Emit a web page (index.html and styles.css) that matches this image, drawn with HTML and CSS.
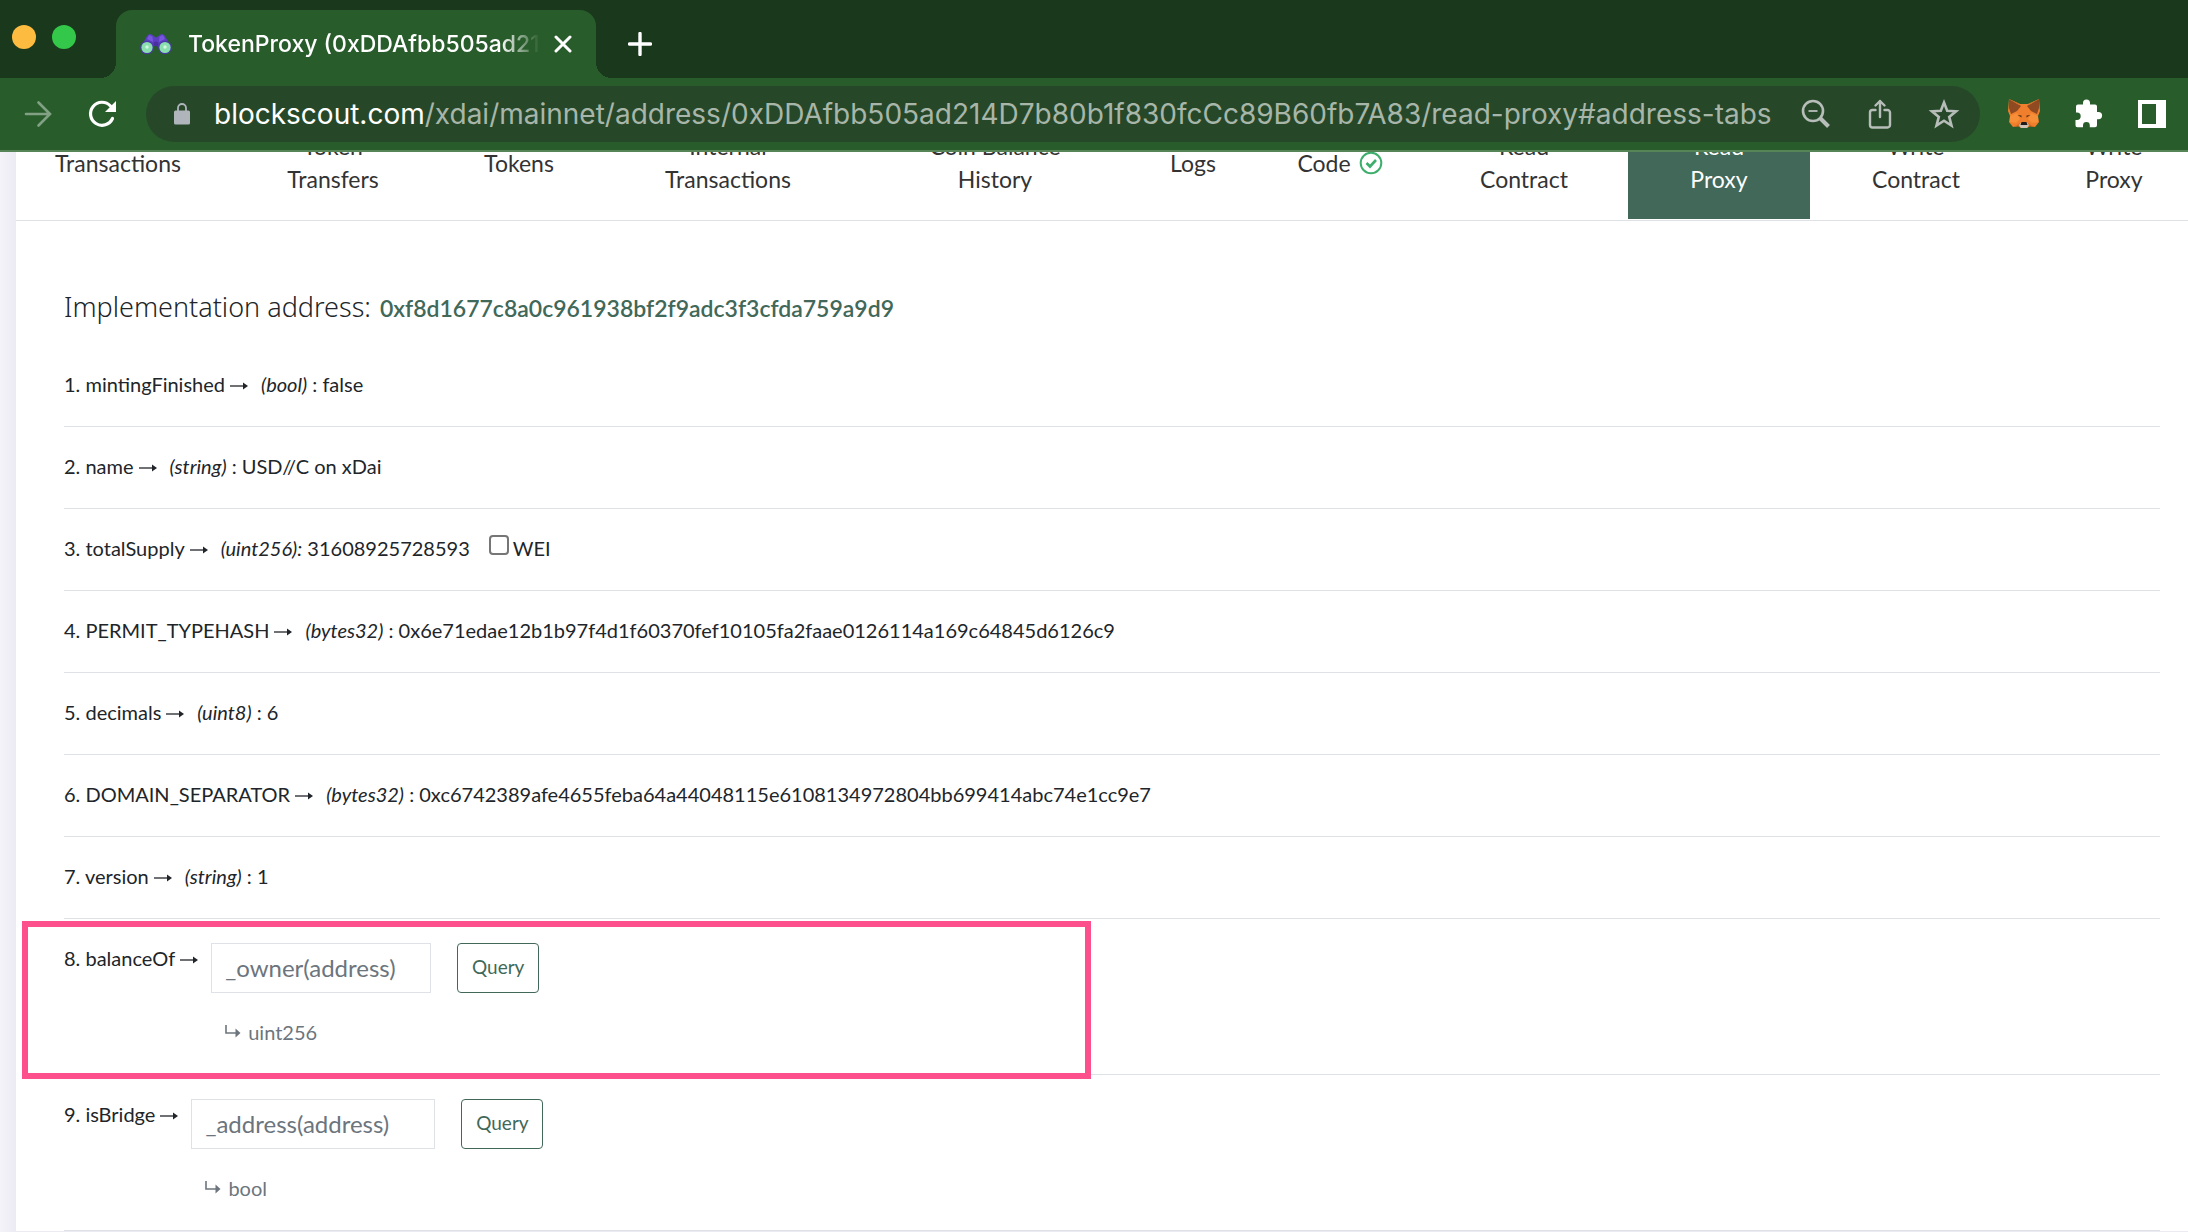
FILE: index.html
```
<!DOCTYPE html>
<html lang="en">
<head>
<meta charset="utf-8">
<meta name="viewport" content="width=device-width, initial-scale=1">
<title>TokenProxy (0xDDAfbb505ad214D7b80b1f830fcCc89B60fb7A83)</title>
<link rel="stylesheet" href="styles.css">
</head>
<body>
<svg class="defs" aria-hidden="true">
  <symbol id="arrow" viewBox="0 0 18 12"><path d="M0 6H16" fill="none" stroke="currentColor" stroke-width="1.300"/><path d="M13 2.500L18 6l-5 3.500z" fill="currentColor"/></symbol>
  <symbol id="turn" viewBox="0 0 16 14"><path d="M1 0V8H13" fill="none" stroke="currentColor" stroke-width="1.600"/><path d="M10.500 3.500L15.500 8l-5 4.500z" fill="currentColor"/></symbol>
</svg>

<header class="browser">
  <div class="tabstrip">
    <div class="lights"><span class="light light-amber"></span><span class="light light-green"></span></div>
    <div class="tab">
      <svg class="favicon" viewBox="0 0 32 22" aria-hidden="true">
        <path d="M2 12L7 3Q10-1 13.500 3L16 4.500 18.500 3Q22-1 25 3l5 9-8 5H20l-2-4h-4l-2 4H9z" fill="#5b3fbf"/>
        <path d="M9 2l3.500 1.500L13 9 7 6zM23 2l-3.500 1.500L19 9l6-3z" fill="#7656dc"/>
        <circle cx="16" cy="11" r="2.500" fill="#4a2fa0"/>
        <circle cx="7" cy="14.500" r="6.800" fill="#4a3aa8"/><circle cx="25" cy="14.500" r="6.800" fill="#4a3aa8"/>
        <circle cx="7" cy="14.500" r="5.600" fill="#8adfae"/><circle cx="25" cy="14.500" r="5.600" fill="#8adfae"/>
        <circle cx="7" cy="14" r="1.700" fill="#d4f6e0"/><circle cx="25" cy="14" r="1.700" fill="#d4f6e0"/>
      </svg>
      <span class="tab-title">TokenProxy (0xDDAfbb505ad214D7b80</span>
      <button class="icon-btn tab-close" aria-label="Close tab"><svg width="18" height="18" viewBox="0 0 18 18"><path d="M2 2l14 14M16 2L2 16" stroke="#fff" stroke-width="3" stroke-linecap="round"/></svg></button>
    </div>
    <button class="icon-btn" aria-label="New tab"><svg width="24" height="24" viewBox="0 0 24 24"><path d="M12 1.500v21M1.500 12h21" stroke="#fff" stroke-width="3.400" stroke-linecap="round"/></svg></button>
  </div>

  <div class="toolbar">
    <div class="nav-buttons">
      <button class="icon-btn" aria-label="Forward"><svg width="32" height="32" viewBox="0 0 32 32"><path d="M4 16H27M16.500 4.500L28 16 16.500 27.500" fill="none" stroke="#82a184" stroke-width="2.600" stroke-linecap="round"/></svg></button>
      <button class="icon-btn" aria-label="Reload"><svg width="32" height="32" viewBox="0 0 32 32"><path d="M26.500 20.500A11.500 11.500 0 1 1 24.500 8" fill="none" stroke="#fff" stroke-width="3.200" stroke-linecap="round"/><path d="M30 3V14H19z" fill="#fff"/></svg></button>
    </div>
    <div class="omnibox">
      <svg class="lock" viewBox="0 0 16 22" aria-hidden="true"><rect y="7.500" width="16" height="14" rx="1.500" fill="#b0b4bb"/><path d="M4 8V5a4 4 0 0 1 8 0v3" fill="none" stroke="#b0b4bb" stroke-width="1.800"/></svg>
      <div class="url"><b>blockscout.com</b>/xdai/mainnet/address/0xDDAfbb505ad214D7b80b1f830fcCc89B60fb7A83/read-proxy#address-tabs</div>
      <button class="icon-btn" aria-label="Zoom"><svg width="32" height="32" viewBox="0 0 32 32"><g fill="none" stroke="#b7bdb8"><circle cx="13" cy="13" r="10" stroke-width="2.600"/><path d="M8.500 13h9" stroke-width="1.800"/><path d="M20 20l8.500 8.500" stroke-width="4"/></g></svg></button>
      <button class="icon-btn" aria-label="Share"><svg width="32" height="32" viewBox="0 0 32 32"><g fill="none" stroke="#b7bdb8" stroke-width="2.400" stroke-linecap="round" stroke-linejoin="round"><path d="M11.500 12H8.500a2.500 2.500 0 0 0-2.500 2.500v12.500a2.500 2.500 0 0 0 2.500 2.500h15a2.500 2.500 0 0 0 2.500-2.500V14.500a2.500 2.500 0 0 0-2.500-2.500h-3"/><path d="M16 19V3M11.500 7.500L16 3l4.500 4.500"/></g></svg></button>
      <button class="icon-btn" aria-label="Bookmark"><svg width="32" height="32" viewBox="0 0 32 32"><path d="M16 4.500l3.200 8.300 8.800.5-6.800 5.600 2.300 8.600L16 22.700l-7.500 4.800 2.300-8.600L4 13.300l8.800-.5z" fill="none" stroke="#b7bdb8" stroke-width="2.600"/></svg></button>
    </div>
    <div class="extensions">
      <button class="icon-btn" aria-label="MetaMask">
        <svg width="32" height="32" viewBox="0 0 32 32">
          <path d="M1 1l11 5h8l11-5 1 12-2 5 1 6-4 5-5-1-3 2h-6l-3-2-5 1-4-5 1-6-2-5z" fill="#ef7f2c"/>
          <path d="M1 1l12 7-4 5-6 3-2-6zM31 1L19 8l4 5 6 3 2-6z" fill="#8f4a22"/>
          <path d="M1 1l11 5-1 1zM31 1L20 6l1 1z" fill="#c9702b"/>
          <path d="M2 18l7-3 3 6-4 4-6-1zM30 18l-7-3-3 6 4 4 6-1z" fill="#f68f38"/>
          <path d="M9.500 17l4 .5v2zM22.500 17l-4 .5v2z" fill="#5d3013"/>
          <path d="M6 29l6-4 1 3zM26 29l-6-4-1 3z" fill="#d66a1f"/>
          <path d="M11 27l2-2.500h6l2 2.500-2 3h-6z" fill="#cfc3b8"/><path d="M13.500 24h5l1 3h-7z" fill="#201b19"/>
        </svg>
      </button>
      <button class="icon-btn" aria-label="Extensions"><svg width="32" height="32" viewBox="0 0 32 32"><path d="M4 8.500A2 2 0 0 1 6 6.500h5V5a3.500 3.500 0 0 1 7 0v1.500h5a2 2 0 0 1 2 2V14h1.500a3.600 3.600 0 0 1 0 7.200H25v6a2 2 0 0 1-2 2h-5.200v-1.700a3.400 3.400 0 0 0-6.800 0v1.700H5.500A2 2 0 0 1 3.500 27v-5H5a3.600 3.600 0 0 0 0-7.400H4z" fill="#fff"/></svg></button>
      <button class="icon-btn" aria-label="Side panel"><svg width="32" height="32" viewBox="0 0 32 32"><path d="M2 2h28v28H2zM6 6v20h14V6z" fill="#fff" fill-rule="evenodd"/></svg></button>
    </div>
  </div>
</header>

<main class="viewport">
  <div class="card">
    <nav class="tabs" aria-label="Address tabs">
      <a href="#transactions">Transactions</a>
      <a href="#token-transfers">Token<br>Transfers</a>
      <a href="#tokens">Tokens</a>
      <a href="#internal">Internal<br>Transactions</a>
      <a href="#coin-balance">Coin Balance<br>History</a>
      <a href="#logs">Logs</a>
      <a href="#code"><span class="with-icon">Code <svg width="24" height="24" viewBox="0 0 24 24" aria-hidden="true"><g fill="none" stroke="#3dae6c"><circle cx="12" cy="12" r="10.300" stroke-width="2"/><path d="M7.500 12l3.500 3.500 6-6.500" stroke-width="2.600"/></g></svg></span></a>
      <a href="#read-contract">Read<br>Contract</a>
      <a href="#read-proxy" class="active" aria-current="page">Read<br>Proxy</a>
      <a href="#write-contract">Write<br>Contract</a>
      <a href="#write-proxy">Write<br>Proxy</a>
    </nav>

    <section class="content">
      <h2 class="implementation">Implementation address: <a href="#implementation">0xf8d1677c8a0c961938bf2f9adc3f3cfda759a9d9</a></h2>

      <div class="row"><span>1. mintingFinished</span><svg class="arrow"><use href="#arrow"/></svg><span><i>(bool)</i> : false</span></div>
      <div class="row"><span>2. name</span><svg class="arrow"><use href="#arrow"/></svg><span><i>(string)</i> : USD//C on xDai</span></div>
      <div class="row"><span>3. totalSupply</span><svg class="arrow"><use href="#arrow"/></svg><span><i>(uint256):</i> 31608925728593</span><label class="wei"><input type="checkbox"> WEI</label></div>
      <div class="row"><span>4. PERMIT_TYPEHASH</span><svg class="arrow"><use href="#arrow"/></svg><span><i>(bytes32)</i> : 0x6e71edae12b1b97f4d1f60370fef10105fa2faae0126114a169c64845d6126c9</span></div>
      <div class="row"><span>5. decimals</span><svg class="arrow"><use href="#arrow"/></svg><span><i>(uint8)</i> : 6</span></div>
      <div class="row"><span>6. DOMAIN_SEPARATOR</span><svg class="arrow"><use href="#arrow"/></svg><span><i>(bytes32)</i> : 0xc6742389afe4655feba64a44048115e6108134972804bb699414abc74e1cc9e7</span></div>
      <div class="row"><span>7. version</span><svg class="arrow"><use href="#arrow"/></svg><span><i>(string)</i> : 1</span></div>

      <div class="row highlighted">
        <label for="owner">8. balanceOf</label><svg class="arrow"><use href="#arrow"/></svg>
        <form class="query">
          <div class="fields"><input id="owner" class="field" type="text" placeholder="_owner(address)"><button type="button" class="query-btn">Query</button></div>
          <div class="returns"><svg class="turn"><use href="#turn"/></svg>uint256</div>
        </form>
      </div>
      <div class="row">
        <label for="address">9. isBridge</label><svg class="arrow"><use href="#arrow"/></svg>
        <form class="query">
          <div class="fields"><input id="address" class="field field-wide" type="text" placeholder="_address(address)"><button type="button" class="query-btn">Query</button></div>
          <div class="returns"><svg class="turn"><use href="#turn"/></svg>bool</div>
        </form>
      </div>
    </section>
  </div>
</main>
</body>
</html>
```
FILE: styles.css
```
:root {
  --frame: #1a381c;
  --toolbar: #285c2b;
  --omnibox: #264829;
  --accent: #416858;
  --text: #212529;
  --muted: #6c757d;
  --line: #dee2e6;
}

*, *::before, *::after { box-sizing: border-box; }

body {
  margin: 0;
  height: 100vh;
  overflow: hidden;
  display: flex;
  flex-direction: column;
  color: var(--text);
  font: 20px/30px Lato, "Noto Sans", sans-serif;
}

svg { display: block; flex: none; }
.defs { position: absolute; width: 0; height: 0; }

button { font: inherit; cursor: pointer; }
.icon-btn { display: flex; flex: none; padding: 0; border: 0; background: none; }

/* Browser frame */
.browser { flex: none; border-bottom: 2px solid #568558; font-family: Inter, "Noto Sans", sans-serif; }

.tabstrip {
  display: flex;
  align-items: center;
  height: 78px;
  padding-top: 10px;
  background: var(--frame);
}
.lights { display: flex; gap: 16px; width: 116px; padding: 0 0 14px 12px; }
.light { width: 24px; height: 24px; border-radius: 50%; }
.light-amber { background: #fdbc40; }
.light-green { background: #34c84a; }

.tab {
  position: relative;
  display: flex;
  align-items: center;
  width: 480px;
  height: 100%;
  margin-right: 32px;
  padding: 0 24px;
  border-radius: 16px 16px 0 0;
  background: var(--toolbar);
}
.tab::before, .tab::after {
  content: "";
  position: absolute;
  bottom: 0;
  width: 16px;
  height: 16px;
}
.tab::before { right: 100%; background: radial-gradient(circle at 0 0, transparent 16px, var(--toolbar) 16px); }
.tab::after { left: 100%; background: radial-gradient(circle at 100% 0, transparent 16px, var(--toolbar) 16px); }
.favicon { width: 32px; height: 22px; margin-right: 16px; }
.tab-title {
  flex: 1;
  overflow: hidden;
  white-space: nowrap;
  color: #fff;
  font-size: 23px;
  font-weight: 500;
  -webkit-mask-image: linear-gradient(to left, transparent, #000 40px);
  mask-image: linear-gradient(to left, transparent, #000 40px);
}
.tab-close { margin-left: 14px; }

.toolbar {
  display: flex;
  align-items: center;
  gap: 28px;
  height: 72px;
  padding: 0 20px 0 22px;
  background: var(--toolbar);
}
.nav-buttons, .extensions { display: flex; gap: 32px; }
.omnibox {
  flex: 1;
  min-width: 0;
  display: flex;
  align-items: center;
  gap: 32px;
  height: 56px;
  padding: 0 20px 0 28px;
  border-radius: 28px;
  background: var(--omnibox);
}
.lock { width: 16px; height: 22px; }
.url {
  flex: 1;
  min-width: 0;
  margin: 0 -16px 0 -8px;
  overflow: hidden;
  white-space: nowrap;
  color: #a8b6a9;
  font-size: 28px;
  line-height: 40px;
}
.url b { color: #fff; font-weight: 400; }

/* Page */
.viewport {
  flex: 1;
  min-height: 0;
  overflow: hidden;
  padding-left: 16px;
  background: linear-gradient(to right, #f4f3f9, #ecebf4 16px);
}
.card { min-height: 100%; background: #fff; }

.tabs {
  display: grid;
  grid-template-columns: 204fr 226fr 146fr 272fr 262fr 134fr 160fr 208fr 182fr 212fr 184fr;
  width: calc(100% + 18px);
  margin-top: -47px;
  padding-bottom: 1px;
  border-bottom: 1px solid var(--line);
}
.tabs a {
  display: flex;
  align-items: center;
  justify-content: center;
  padding: 25px 0 23px;
  color: #333;
  font-size: 23px;
  line-height: 33px;
  text-align: center;
  text-decoration: none;
}
.tabs .active { background: var(--accent); color: #fff; }
.with-icon { display: flex; align-items: center; gap: 8px; }

.content { padding: 68px 28px 0 48px; }

.implementation {
  margin: 0 0 19px;
  font: 300 27px/36px "Noto Sans", sans-serif;
}
.implementation a {
  margin-left: 2px;
  color: var(--accent);
  font: 600 23px/36px Lato, "Noto Sans", sans-serif;
  text-decoration: none;
}

.row {
  position: relative;
  display: flex;
  align-items: flex-start;
  padding: 24px 0 27px;
  border-bottom: 1px solid var(--line);
}
.arrow { width: 18px; height: 12px; margin: 11px 13px 0 5px; }

.wei { display: flex; align-items: center; gap: 4px; margin-left: 19px; }
.wei input {
  appearance: none;
  width: 20px;
  height: 20px;
  margin: 0 0 6px;
  border: 2px solid #767676;
  border-radius: 4px;
  background: #fff;
}

.fields { display: flex; gap: 26px; }
.field {
  width: 220px;
  height: 50px;
  padding: 0 13px 2px;
  border: 1px solid var(--line);
  border-radius: 0;
  background: #fff;
  color: var(--text);
  font: inherit;
  font-size: 24px;
}
.field-wide { width: 244px; }
.field::placeholder { color: var(--muted); opacity: 1; }
.query-btn {
  width: 82px;
  height: 50px;
  padding: 0 0 2px;
  border: 1px solid var(--accent);
  border-radius: 4px;
  background: #fff;
  color: var(--accent);
  font-size: 19px;
}
.returns {
  display: flex;
  align-items: center;
  gap: 7px;
  margin-top: 24px;
  padding-left: 14px;
  color: var(--muted);
}
.turn { width: 16px; height: 14px; }

.highlighted::after {
  content: "";
  position: absolute;
  z-index: 1;
  top: 2px;
  left: -42px;
  width: 51%;
  height: 158px;
  border: 6px solid #fc4f8b;
  pointer-events: none;
}
```
